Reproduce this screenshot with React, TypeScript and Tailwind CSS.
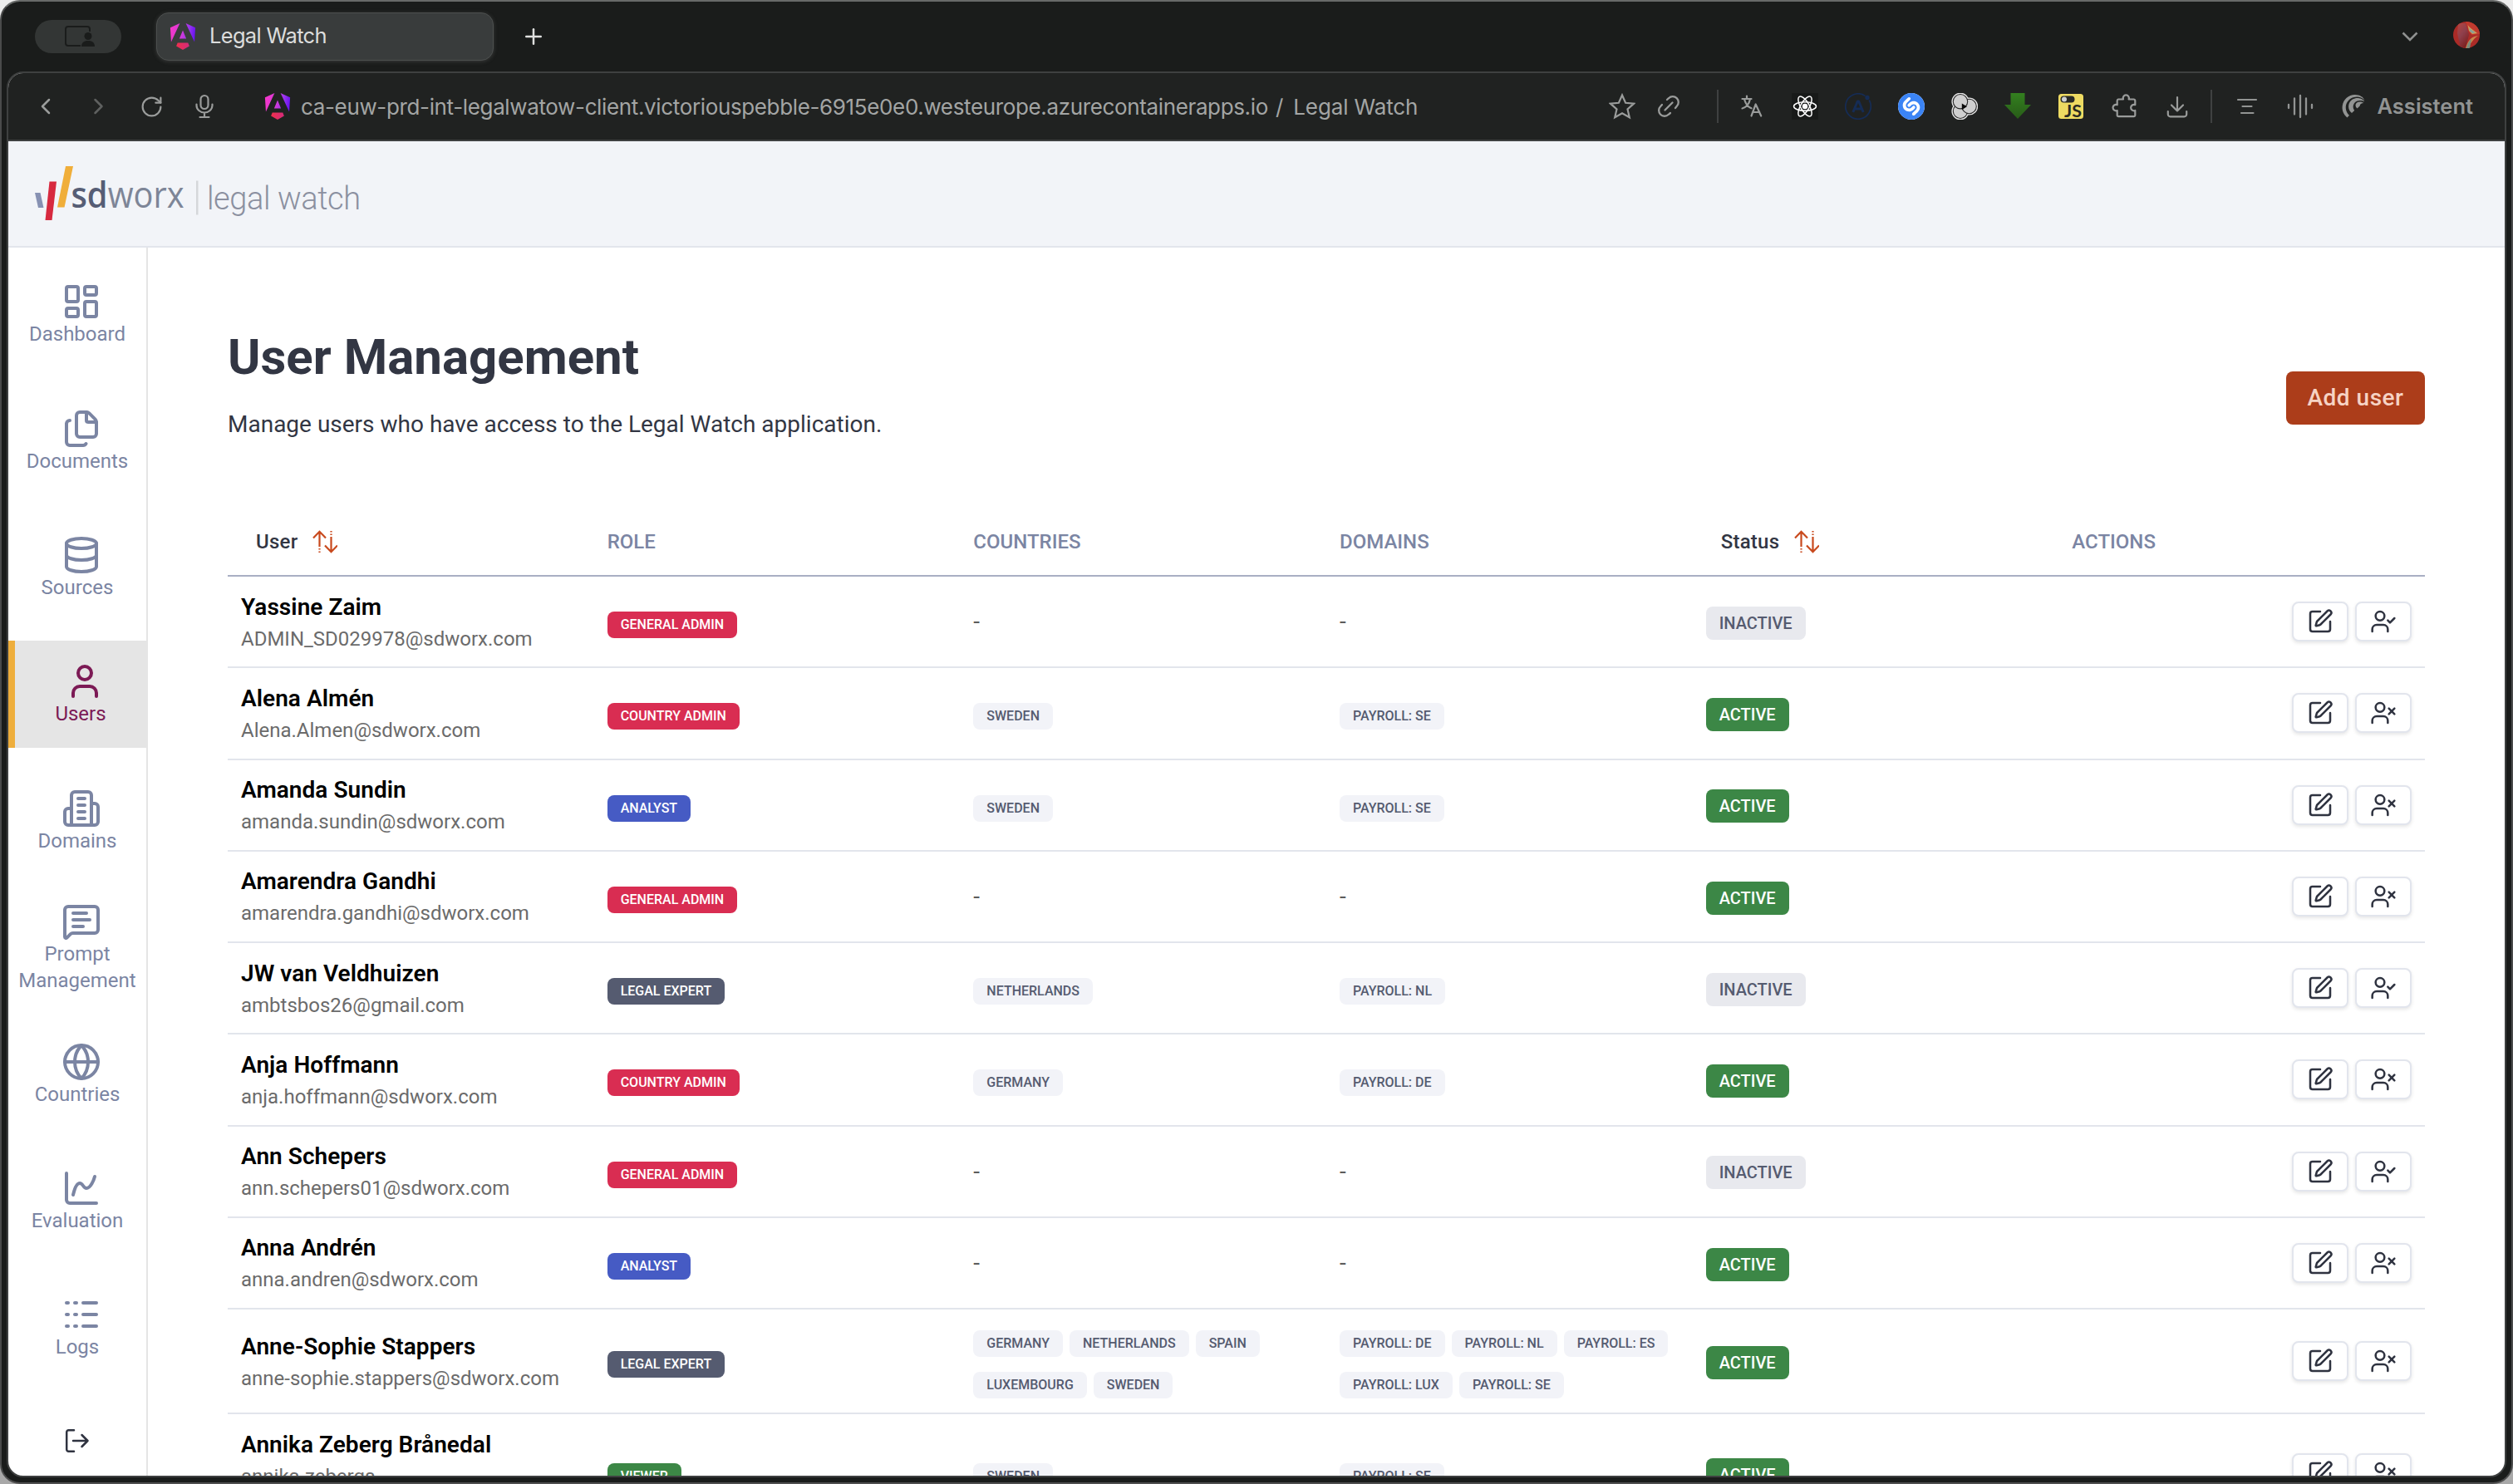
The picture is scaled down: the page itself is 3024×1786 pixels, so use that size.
import React from "react";
import {
  ChartSpline,
  Database,
  Files,
  Globe,
  LayoutDashboard,
  Logs,
  MessageSquareText,
  Plus,
  RotateCw,
  SquarePen,
  User,
  UserCheck,
  UserX,
} from "lucide-react";
import { SiShazam } from "react-icons/si";

type Role = "GENERAL ADMIN" | "COUNTRY ADMIN" | "ANALYST" | "LEGAL EXPERT" | "VIEWER";

interface Person {
  name: string;
  email: string;
  email2?: string;
  role: Role;
  countries: string[];
  domains: string[];
  active: boolean;
  height?: string;
}

const roleColors: Record<Role, string> = {
  "GENERAL ADMIN": "bg-[#d92d52]",
  "COUNTRY ADMIN": "bg-[#d92d52]",
  ANALYST: "bg-[#465bc4]",
  "LEGAL EXPERT": "bg-[#555b70]",
  VIEWER: "bg-[#3c8746]",
};

const people: Person[] = [
  { name: "Yassine Zaim", email: "ADMIN_SD029978@sdworx.com", role: "GENERAL ADMIN", countries: [], domains: [], active: false },
  { name: "Alena Almén", email: "Alena.Almen@sdworx.com", role: "COUNTRY ADMIN", countries: ["SWEDEN"], domains: ["PAYROLL: SE"], active: true },
  { name: "Amanda Sundin", email: "amanda.sundin@sdworx.com", role: "ANALYST", countries: ["SWEDEN"], domains: ["PAYROLL: SE"], active: true },
  { name: "Amarendra Gandhi", email: "amarendra.gandhi@sdworx.com", role: "GENERAL ADMIN", countries: [], domains: [], active: true },
  { name: "JW van Veldhuizen", email: "ambtsbos26@gmail.com", role: "LEGAL EXPERT", countries: ["NETHERLANDS"], domains: ["PAYROLL: NL"], active: false },
  { name: "Anja Hoffmann", email: "anja.hoffmann@sdworx.com", role: "COUNTRY ADMIN", countries: ["GERMANY"], domains: ["PAYROLL: DE"], active: true },
  { name: "Ann Schepers", email: "ann.schepers01@sdworx.com", role: "GENERAL ADMIN", countries: [], domains: [], active: false },
  { name: "Anna Andrén", email: "anna.andren@sdworx.com", role: "ANALYST", countries: [], domains: [], active: true },
  {
    name: "Anne-Sophie Stappers",
    email: "anne-sophie.stappers@sdworx.com",
    role: "LEGAL EXPERT",
    countries: ["GERMANY", "NETHERLANDS", "SPAIN", "LUXEMBOURG", "SWEDEN"],
    domains: ["PAYROLL: DE", "PAYROLL: NL", "PAYROLL: ES", "PAYROLL: LUX", "PAYROLL: SE"],
    active: true,
    height: "h-[126px]",
  },
  {
    name: "Annika Zeberg Brånedal",
    email: "annika.zebergs",
    email2: "@sdworx.com",
    role: "VIEWER",
    countries: ["SWEDEN"],
    domains: ["PAYROLL: SE"],
    active: true,
    height: "h-[144px]",
  },
];

function AngularLogo({ id }: { id: string }) {
  return (
    <svg viewBox="0 0 24 24" className="size-8 shrink-0">
      <defs>
        <linearGradient id={id} x1="0" y1="0.25" x2="1" y2="0.35">
          <stop offset="0" stopColor="#f637c8" />
          <stop offset="0.45" stopColor="#d63ad9" />
          <stop offset="0.75" stopColor="#9a35ee" />
          <stop offset="1" stopColor="#6a14f0" />
        </linearGradient>
        <linearGradient id={id + "b"} x1="0" y1="0.5" x2="1" y2="0.5">
          <stop offset="0" stopColor="#f0304c" />
          <stop offset="1" stopColor="#d42a7c" />
        </linearGradient>
      </defs>
      <path
        fill={`url(#${id})`}
        d="M14.692 0l7.832 16.855.814-12.856L14.692 0ZM9.308 0 .662 3.999l.814 12.856L9.308 0Zm-.405 13.93h6.198L12 6.396 8.903 13.93Z"
      />
      <path fill={`url(#${id}b)`} d="M16.712 17.711H7.288l-1.204 2.916L12 24l5.916-3.373-1.204-2.916Z" />
    </svg>
  );
}

function OfficeBuilding({ className, strokeWidth }: { className?: string; strokeWidth?: number }) {
  return (
    <svg
      viewBox="0 0 24 24"
      className={className}
      fill="none"
      stroke="currentColor"
      strokeWidth={strokeWidth}
      strokeLinecap="round"
      strokeLinejoin="round"
    >
      <path d="M6 22V4a2 2 0 0 1 2-2h8a2 2 0 0 1 2 2v18ZM6 12H4a2 2 0 0 0-2 2v6a2 2 0 0 0 2 2h2M18 9h2a2 2 0 0 1 2 2v9a2 2 0 0 1-2 2h-2M10 6h4M10 10h4M10 14h4M10 18h4" />
    </svg>
  );
}

function Ico({ children, sw = 2 }: { children: React.ReactNode; sw?: number }) {
  return (
    <svg
      viewBox="0 0 32 32"
      className="size-8 shrink-0"
      fill="none"
      stroke="currentColor"
      strokeWidth={sw}
      strokeLinecap="round"
      strokeLinejoin="round"
    >
      {children}
    </svg>
  );
}

function TabBar() {
  return (
    <div className="flex h-[84px] shrink-0 items-center pl-10 pr-[38px]">
      <div className="flex h-10 w-[104px] items-center justify-center rounded-full bg-[#333635] pl-1">
        <svg viewBox="0 0 38 26" className="h-[26px] w-[38px]" fill="none" stroke="#1a1c1b" strokeWidth="2">
          <path d="M20 24H5a3 3 0 0 1-3-3V4a3 3 0 0 1 3-3h23a3 3 0 0 1 3 3v3" />
          <circle cx="29" cy="12.500" r="4.500" fill="#1a1c1b" stroke="none" />
          <path d="M21 25c0-4.500 3-7 8-7s8 2.500 8 7z" fill="#1a1c1b" stroke="none" />
        </svg>
      </div>
      <div className="ml-[42px] flex h-[58px] w-[406px] items-center rounded-[15px] border border-[#4d504f] bg-[#393c3c] pl-[15px] shadow-[0_1px_5px_rgba(120,120,120,0.35)]">
        <AngularLogo id="ngTab" />
        <span className="-mt-px ml-4 text-[25.500px] tracking-[-0.7px] text-[#dcdddc]">Legal Watch</span>
      </div>
      <Plus className="-mt-px ml-[33px] size-[30px] text-[#dfe0df]" strokeWidth={2} />
      <div className="flex-1" />
      <svg viewBox="0 0 20 12" className="mr-[42px] h-3 w-5" fill="none" stroke="#8f9190" strokeWidth="2.500">
        <path d="M1.500 1.500 10 10l8.500-8.500" />
      </svg>
      <svg viewBox="0 0 32 32" className="-mt-1 size-8">
        <defs>
          <clipPath id="avatarClip">
            <circle cx="16" cy="16" r="16" />
          </clipPath>
          <linearGradient id="avatarBody" x1="0" y1="0" x2="0.6" y2="1">
            <stop offset="0" stopColor="#b8453f" />
            <stop offset="0.5" stopColor="#8e3f4c" />
            <stop offset="1" stopColor="#7d201f" />
          </linearGradient>
        </defs>
        <g clipPath="url(#avatarClip)">
          <rect width="32" height="32" fill="#ab2b27" />
          <path d="M6 2h9l4 14-4 16H9L5 14z" fill="url(#avatarBody)" />
          <path d="M15 0l4 12 3 4 10-1V8C27 2 21 0 15 0z" fill="#c03a2e" />
          <path d="M17.500 4l1.500 7 4 4 6-1c-3-3-8-5-11.500-10z" fill="#cf9f5a" />
          <path d="M19 8l1.500 4 3 2 3-1z" fill="#86a09c" />
          <path d="M30 17c-7 1-12 4-15 15h4c1-5 5-11 11-15z" fill="#c8864a" />
          <path d="M22 21c-3 2-5 6-6 11h4z" fill="#7a8a7c" />
        </g>
      </svg>
    </div>
  );
}

function Toolbar() {
  return (
    <div className="flex h-[82px] shrink-0 items-center border-b-2 border-[#3e4040] bg-[#202221] pl-[28px] pr-[38px] text-[#9a9c9b]">
      <div className="flex items-center gap-8">
        <Ico sw={2.5}>
          <path d="m21 8-8 8 8 8" />
        </Ico>
        <span className="text-[#5f6160]">
          <Ico sw={2.5}>
            <path d="m12.500 8 8 8-8 8" />
          </Ico>
        </span>
        <span className="flex size-8 items-center justify-center">
          <RotateCw className="size-[29px]" strokeWidth={1.8} />
        </span>
        <Ico sw={2.2}>
          <rect x="11.500" y="3" width="9" height="16" rx="4.500" />
          <path d="M6.500 13.500v1.500a9.500 8.500 0 0 0 19 0v-1.500M16 23.500v4.500M10.500 29h11" />
        </Ico>
      </div>
      <span className="ml-14">
        <AngularLogo id="ngBar" />
      </span>
      <div className="ml-3 flex whitespace-nowrap text-[26px] text-[#a3a5a4]">
        <span className="tracking-[-0.36px]">
          ca-euw-prd-int-legalwatow-client.victoriouspebble-6915e0e0.westeurope.azurecontainerapps.io
        </span>
        <span className="ml-[9px]">/</span>
        <span className="ml-3 tracking-[-0.12px]">Legal Watch</span>
      </div>
      <div className="flex-1" />
      <Ico sw={2.2}>
        <path strokeLinejoin="miter" d="m16 2.500 4.100 9.300 10 .9-7.600 6.700 2.300 9.900L16 24.200l-8.800 5.100 2.300-9.900-7.600-6.700 10-.9z" />
      </Ico>
      <span className="ml-6">
        <Ico sw={2.3}>
          <path d="m11.500 20.500 9-9M14 8l2-1.800a6.800 6.800 0 0 1 9.800 9.600L24 18M8 14l-1.800 2a6.800 6.800 0 0 0 9.600 9.800L18 24" />
        </Ico>
      </span>
      <div className="ml-[42px] h-10 w-0.5 bg-[#3f4141]" />
      <div className="ml-6 flex items-center gap-8">
        <Ico sw={2.2}>
          <path d="M4.500 7h11M10 3.500V7M14 7c-1 6-5 10.500-9.500 11.500M7 7.500c1.500 5 5 9.500 8.500 10.800M15.500 27.500l5.200-14 6.500 14M17.500 23h7.800" />
        </Ico>
        <span className="bg-[#181a19] text-white">
          <Ico sw={1.5}>
            <ellipse cx="16" cy="16" rx="13.500" ry="5.200" />
            <ellipse cx="16" cy="16" rx="13.500" ry="5.200" transform="rotate(60 16 16)" />
            <ellipse cx="16" cy="16" rx="13.500" ry="5.200" transform="rotate(120 16 16)" />
            <circle cx="16" cy="16" r="2.500" fill="currentColor" />
          </Ico>
        </span>
        <span className="text-[#152c55]">
          <Ico sw={1.7}>
            <path d="M24 3.100A15.200 15.200 0 1 0 29.500 9" />
            <circle cx="27" cy="5.500" r="1.800" fill="currentColor" />
            <path strokeWidth="3" strokeLinecap="butt" d="M9.800 23 15.300 10h1.400L22.200 23M12.500 19h7" />
          </Ico>
        </span>
        <span className="flex size-8 items-center justify-center rounded-full bg-white text-[#3b84f5]">
          <SiShazam className="size-8" />
        </span>
        <Ico sw={1.1}>
          <g fill="#cfcfcf" stroke="#e4e4e4" strokeWidth="1.600">
            <circle cx="11" cy="10.200" r="9.800" />
            <circle cx="21.600" cy="16" r="9.800" />
            <circle cx="11" cy="21.800" r="9.800" />
          </g>
          <g fill="#cfcfcf" stroke="#2a2a2a">
            <circle cx="11" cy="21.800" r="8.700" />
            <circle cx="21.600" cy="16" r="8.700" />
            <circle cx="11" cy="10.200" r="8.700" />
          </g>
          <path d="M12.800 12.500v7.500l6.200-3.800z" fill="#0a0a0a" stroke="none" />
        </Ico>
        <svg viewBox="0 0 32 32" className="size-8">
          <defs>
            <linearGradient id="arrowFill" x1="0" y1="0" x2="0" y2="1">
              <stop offset="0" stopColor="#33801f" />
              <stop offset="1" stopColor="#285c18" />
            </linearGradient>
          </defs>
          <path d="M7.500 0h17v14H32L16 31 0 14h7.500z" fill="url(#arrowFill)" />
        </svg>
        <svg viewBox="0 0 32 32" className="size-8">
          <rect x="1" y="1" width="30" height="30" rx="3.500" fill="#eedb62" />
          <rect x="3.500" y="3.500" width="17" height="8" rx="4" fill="#2a2b26" />
          <circle cx="8" cy="7.500" r="3" fill="#cdd0d2" />
          <text x="8" y="28.500" fontSize="20" fontWeight="700" fill="#2b2b22" fontFamily="Lato" textLength="21" lengthAdjust="spacingAndGlyphs">
            JS
          </text>
        </svg>
        <Ico sw={2.2}>
          <path d="M9 7.500h6a3.600 3.600 0 1 1 6.600 0h6a1.700 1.700 0 0 1 1.700 1.700v5a3.700 3.700 0 1 0 0 6.800v5.500a1.700 1.700 0 0 1-1.700 1.700H9.400a1.700 1.700 0 0 1-1.700-1.700V21a3.700 3.700 0 1 1 0-6.800V9.200A1.700 1.700 0 0 1 9 7.500z" />
        </Ico>
        <Ico sw={2.2}>
          <path d="M16 5v16.500M9 14.500l7 7 7-7M4.800 22v3.500a2.800 2.800 0 0 0 2.800 2.800h16.800a2.800 2.800 0 0 0 2.800-2.800V22" />
        </Ico>
      </div>
      <div className="ml-6 h-10 w-0.5 bg-[#3f4141]" />
      <div className="ml-[26px] flex items-center gap-8 text-[#929493]">
        <Ico sw={2.2}>
          <path d="M5 8h22M10.500 16h11M9 24h14.500" />
        </Ico>
        <Ico sw={2.3}>
          <path d="M2 14v4M9 6.500v19M16 3v26M23 6.500v19M30 14v4" />
        </Ico>
        <Ico sw={1}>
          <g fill="currentColor" stroke="none">
            <path d="M8.500 29.500C4 26 2 20.500 2.700 15.500 3.700 7.500 10.500 1.800 18 2c5.500.1 10 2.800 11.300 6.500C26 5 21.500 3.600 16.500 5 10 6.800 6.300 12.500 6.800 18.500c.3 3.500 2 6.300 4.200 8.300z" />
            <path d="M14 24c-3.800-3-4.800-8-3-12 2-4.500 7-6.800 12-5.800 3 .6 5.300 2 6.300 4-4.300-2.200-9.800-1.700-12.300 2-2 3-1.700 6 .2 8.800z" />
            <path d="M20.500 18.500c-2.500-2.300-2.500-5.300-.3-7 2.300-1.600 6.300-1.200 8.300.6-3 .1-4.700 1.100-4.800 3.400z" />
          </g>
        </Ico>
      </div>
      <span className="ml-[13px] text-[25.500px] font-semibold text-[#929493]">Assistent</span>
    </div>
  );
}

function AppHeader() {
  return (
    <header className="flex h-32 shrink-0 items-center border-b-2 border-[#e2e5ec] bg-[#f2f4f8] pl-8">
      <svg viewBox="0 0 400 66" className="h-[66px] w-[400px]">
        <path d="M0 32h6.500l4 18H4z" fill="#8791b3" />
        <path d="M17.500 18.500H26L20.500 65h-8z" fill="#d7293f" />
        <path d="M37 0h9L35.500 49.500H27z" fill="#f0ae3a" />
        <text x="43.500" y="50" fontFamily="Open Sans" fontSize="44" textLength="136" lengthAdjust="spacingAndGlyphs" fill="#7d8597">
          <tspan fill="#565d75" fontWeight="600">sd</tspan>
          <tspan fontWeight="500">worx</tspan>
        </text>
        <rect x="194" y="17.500" width="2.500" height="41" fill="#d5d7da" />
        <text x="207" y="51.500" fontFamily="Roboto" fontWeight="300" fontSize="38" textLength="185" fill="#8b90a0">
          legal watch
        </text>
      </svg>
    </header>
  );
}

const navItems = [
  { label: "Dashboard", Icon: LayoutDashboard },
  { label: "Documents", Icon: Files },
  { label: "Sources", Icon: Database },
  { label: "Users", Icon: User, active: true },
  { label: "Domains", Icon: OfficeBuilding },
  { label: "Prompt Management", Icon: MessageSquareText },
  { label: "Countries", Icon: Globe },
  { label: "Evaluation", Icon: ChartSpline },
  { label: "Logs", Icon: Logs },
];

function Sidebar() {
  return (
    <nav className="flex w-[168px] shrink-0 flex-col gap-6 border-r-2 border-[#e5e5e5] pt-4">
      {navItems.map(({ label, Icon, active }) => (
        <div
          key={label}
          className={
            "flex h-[128.400px] shrink-0 flex-col items-center justify-center " +
            (active ? "border-l-8 border-[#eeae3c] bg-[#e5e5e5] text-[#7c1a55]" : "text-[#7b85a3]")
          }
        >
          <Icon className="-mb-px ml-2.5 mt-px size-12 shrink-0" strokeWidth={2} />
          <span className="w-min text-center text-[24px] leading-8">{label}</span>
        </div>
      ))}
      <div className="flex h-24 shrink-0 items-center justify-center text-[#2f3340]">
        <svg viewBox="0 0 30 30" className="size-[30px]" fill="none" stroke="currentColor" strokeWidth="2.500" strokeLinecap="round" strokeLinejoin="round">
          <path d="M11 2.200H4.500A2.300 2.300 0 0 0 2.200 4.500v21a2.300 2.300 0 0 0 2.300 2.300H11M10 15h17.500M20.500 8l7 7-7 7" />
        </svg>
      </div>
    </nav>
  );
}

function SortIcon() {
  return (
    <svg viewBox="0 0 30 28" className="ml-[18px] h-7 w-[30px]" fill="none" stroke="#c8491d" strokeWidth="2.200">
      <path d="M8.500 2v18M8.500 22v1.500M8.500 25.500V27M1 9.500l7.500-7.700L16 9.500M22.500 26V8M22.500 6V4.500M22.500 2.500V1M15 18.500l7.500 7.700 7.500-7.700" />
    </svg>
  );
}

function Chip({ label, color }: { label: string; color: string }) {
  return (
    <span className={"mb-[5px] mt-[13px] flex h-8 items-center rounded-lg px-4 text-[16px] font-medium " + color}>
      {label}
    </span>
  );
}

function ChipList({ items }: { items: string[] }) {
  if (items.length === 0) {
    return <div className="px-4 text-[28px] leading-8 text-[#5c5c5c]">-</div>;
  }
  return (
    <div className="flex flex-wrap gap-x-2 pl-4">
      {items.map((item) => (
        <Chip key={item} label={item} color="bg-[#f2f3f8] text-[#555b70]" />
      ))}
    </div>
  );
}

function ActionButton({ children }: { children: React.ReactNode }) {
  return (
    <button className="flex h-12 w-[68px] items-center justify-center rounded-lg border-2 border-[#e2e5ed] bg-white text-[#2f3340] shadow-[0_2px_4px_rgba(0,0,0,0.1)]">
      {children}
    </button>
  );
}

function Row({ person }: { person: Person }) {
  return (
    <div className={"grid shrink-0 grid-cols-6 items-center border-b-2 border-[#e2e5ec] " + (person.height ?? "h-[110.250px]")}>
      <div className="whitespace-nowrap px-4 pt-[5px]">
        <div className="text-[28px] font-semibold leading-9 tracking-[0.05px] text-black">{person.name}</div>
        <div className="text-[24px] leading-10 text-[#6b6b6b]">{person.email}</div>
        {person.email2 && <div className="text-[24px] leading-[34px] text-[#6b6b6b]">{person.email2}</div>}
      </div>
      <div className="flex px-4">
        <Chip label={person.role} color={"text-white " + roleColors[person.role]} />
      </div>
      <ChipList items={person.countries} />
      <ChipList items={person.domains} />
      <div className="flex px-4 pt-[3.500px]">
        <span
          className={
            "flex h-10 items-center rounded-lg px-4 text-[20px] font-medium " +
            (person.active ? "bg-[#3c8746] text-white" : "bg-[#e8e9ee] text-[#555b70]")
          }
        >
          {person.active ? "ACTIVE" : "INACTIVE"}
        </span>
      </div>
      <div className="flex justify-end gap-2 px-4">
        <ActionButton>
          <SquarePen className="size-8" strokeWidth={1.9} />
        </ActionButton>
        <ActionButton>
          {person.active ? <UserX className="size-8" strokeWidth={1.9} /> : <UserCheck className="size-8" strokeWidth={1.9} />}
        </ActionButton>
      </div>
    </div>
  );
}

function UsersPage() {
  return (
    <main className="flex min-w-0 flex-1 flex-col pl-24 pr-24">
      <div className="flex shrink-0 items-start justify-between pt-[90px]">
        <div className="text-[#323643]">
          <h1 className="text-[60px] font-bold leading-[84px]">User Management</h1>
          <p className="mt-[21px] text-[28px] leading-9">Manage users who have access to the Legal Watch application.</p>
        </div>
        <button className="mt-[59px] flex h-16 w-[167px] items-center justify-center rounded-lg bg-[#ac3d1a] text-[28px] font-medium text-[#f6d3c4]">
          <span className="tracking-[0.5px]">Add user</span>
        </button>
      </div>
      <div className="mt-[79px] grid h-[86px] shrink-0 grid-cols-6 items-center border-b-2 border-[#a9afc3] pt-[3px] text-[24px] font-medium text-[#7b85a3]">
        <div className="flex items-center pl-[34px] text-[#323643]">
          <span className="tracking-[0.25px]">User</span>
          <SortIcon />
        </div>
        <div className="pl-4">ROLE</div>
        <div className="pl-4">COUNTRIES</div>
        <div className="pl-4">DOMAINS</div>
        <div className="flex items-center pl-[34px] text-[#323643]">
          <span className="tracking-[0.25px]">Status</span>
          <SortIcon />
        </div>
        <div className="pl-4">ACTIONS</div>
      </div>
      {people.map((p) => (
        <Row key={p.email} person={p} />
      ))}
    </main>
  );
}

export default function App() {
  return (
    <div className="h-[1786px] w-[3024px] overflow-hidden bg-gradient-to-b from-[#ececec] to-[#a8a8a8]">
      <div className="flex h-full flex-col rounded-[24px] border-2 border-t-[#686a69] border-r-[#4a4b4b] border-b-[#4f4f4f] border-l-[#4a4b4b] bg-[#1a1c1b] font-['Inter',sans-serif]">
        <TabBar />
        <div className="mx-1.5 mb-1.5 flex min-h-0 flex-1 flex-col overflow-hidden rounded-[20px] border-2 border-[#3e4040] bg-white">
          <Toolbar />
          <div className="flex min-h-0 flex-1 flex-col font-['Roboto',sans-serif]">
            <AppHeader />
            <div className="flex min-h-0 flex-1 overflow-hidden">
              <Sidebar />
              <UsersPage />
            </div>
          </div>
        </div>
      </div>
    </div>
  );
}
